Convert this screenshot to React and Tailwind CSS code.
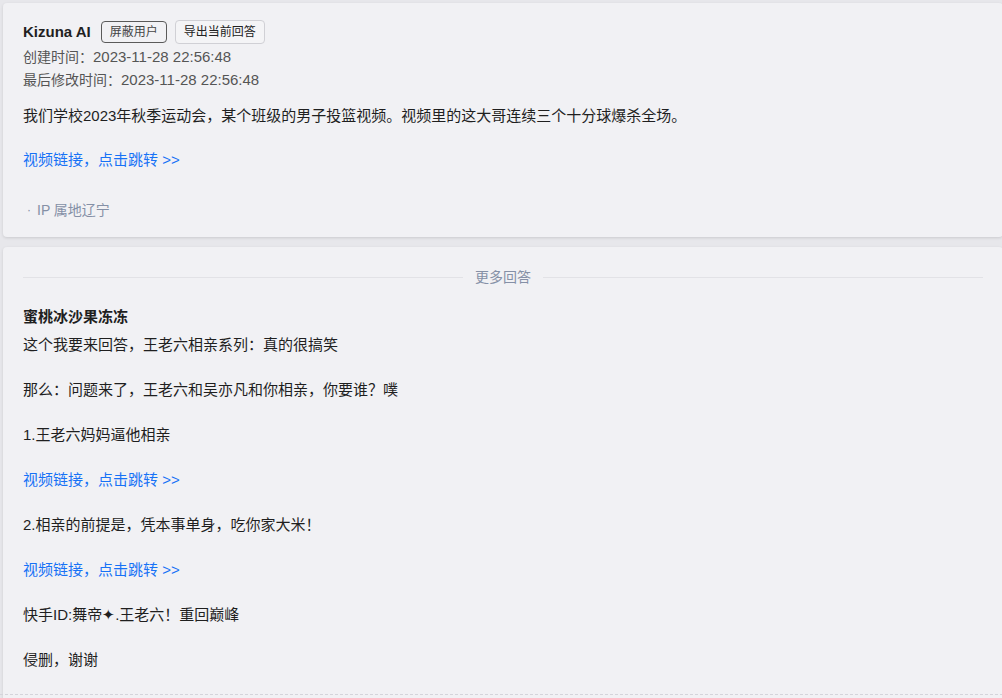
function LinkLine() {
  return (
    <p className="text-[15px] leading-[24px] text-[#1772f6]">
      视频链接，点击跳转 &gt;&gt;
    </p>
  );
}

export default function App() {
  const font = {
    fontFamily:
      '"Liberation Sans", "Noto Sans CJK SC", sans-serif',
  };

  return (
    <div
      className="min-h-screen w-[1002px] overflow-hidden bg-[#e7e7eb] pt-[3px]"
      style={font}
    >
      {/* Question / first answer */}
      <section className="ml-[3px] w-[1000px] rounded-[4px] bg-[#f1f1f4] px-[20px] pt-[17px] pb-[15px] shadow-[0_1px_3px_rgba(0,0,0,0.12)]">
        <div className="flex items-center h-[24px]">
          <span className="text-[15px] font-bold text-[#1f1f1f]">Kizuna AI</span>
          <button className="ml-[10px] h-[22px] rounded-[4px] border border-[#5a5a5a] px-[8px] text-[12px] leading-[20px] text-[#444]">
            屏蔽用户
          </button>
          <button className="ml-[8px] h-[24px] rounded-[4px] border border-[#d0d0d5] bg-[#f4f4f6] px-[8px] text-[12px] leading-[22px] text-[#222]">
            导出当前回答
          </button>
        </div>
        <div className="mt-[2px] flex h-[23px] items-center text-[14px] text-[#555]">
          创建时间：<span className="text-[15px]">2023-11-28 22:56:48</span>
        </div>
        <div className="flex h-[23px] items-center text-[14px] text-[#555]">
          最后修改时间：<span className="text-[15px]">2023-11-28 22:56:48</span>
        </div>
        <p className="mt-[12px] text-[15px] leading-[23px] text-[#1f1f1f]">
          我们学校2023年秋季运动会，某个班级的男子投篮视频。视频里的这大哥连续三个十分球爆杀全场。
        </p>
        <div className="mt-[21px]">
          <LinkLine />
        </div>
        <div className="mt-[26px] flex h-[24px] items-center text-[14px] text-[#8590a6]">
          <span className="ml-[4px] mr-[6px] text-[12px]">·</span>IP 属地辽宁
        </div>
      </section>

      {/* More answers */}
      <section className="ml-[3px] mt-[10px] w-[1000px] rounded-t-[4px] bg-[#f1f1f4] pt-[20px] shadow-[0_1px_3px_rgba(0,0,0,0.12)]">
        <div className="relative mx-[20px] flex h-[20px] items-center justify-center">
          <div className="absolute inset-x-0 top-1/2 h-px bg-[#e2e2e6]" />
          <span className="relative bg-[#f1f1f4] px-[12px] text-[14px] text-[#8590a6]">
            更多回答
          </span>
        </div>
        <div className="px-[20px] pt-[18px] text-[15px] text-[#1f1f1f]">
          <div className="font-bold leading-[24px]">蜜桃冰沙果冻冻</div>
          <div className="mt-[4px] flex flex-col gap-[21px]">
            <p className="leading-[24px]">这个我要来回答，王老六相亲系列：真的很搞笑</p>
            <p className="leading-[24px]">那么：问题来了，王老六和吴亦凡和你相亲，你要谁？噗</p>
            <p className="leading-[24px]">1.王老六妈妈逼他相亲</p>
            <LinkLine />
            <p className="leading-[24px]">2.相亲的前提是，凭本事单身，吃你家大米！</p>
            <LinkLine />
            <p className="leading-[24px]">快手ID:舞帝✦.王老六！重回巅峰</p>
            <p className="leading-[24px]">侵删，谢谢</p>
          </div>
        </div>
        <div className="-ml-[3px] mt-[22px] w-[1003px] border-t border-dashed border-[#d4d4da]" />
        <div className="h-[20px]" />
      </section>
    </div>
  );
}
